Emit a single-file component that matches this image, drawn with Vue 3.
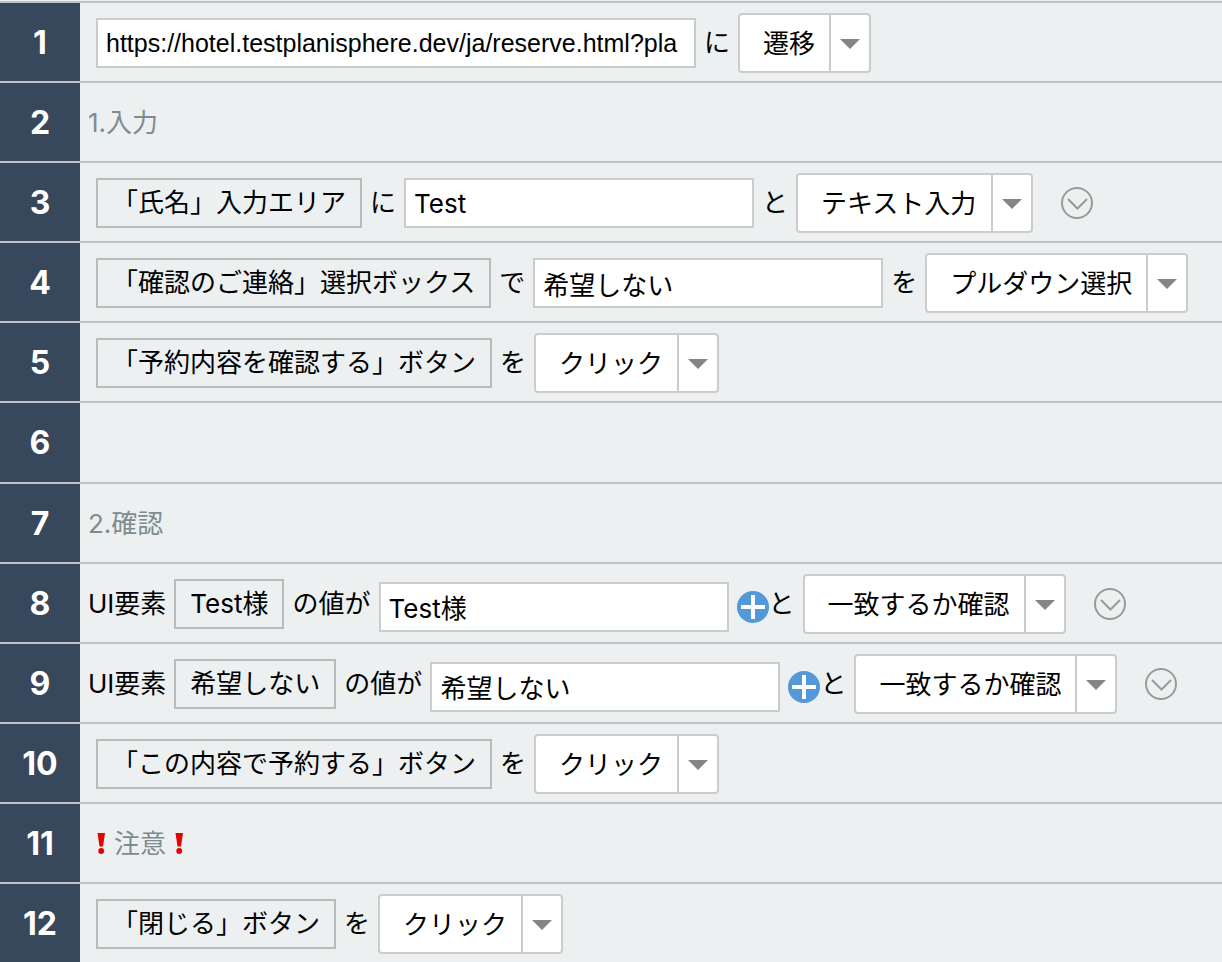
<script setup>
import { ref } from 'vue'

const steps = ref([
  [
    { type: 'input', value: 'https://hotel.testplanisphere.dev/ja/reserve.html?pla', label: 'URL', url: true },
    { type: 'text', value: 'に' },
    { type: 'select', value: '遷移' }
  ],
  [{ type: 'comment', value: '1.入力' }],
  [
    { type: 'element', value: '「氏名」入力エリア' },
    { type: 'text', value: 'に' },
    { type: 'input', value: 'Test', label: '入力値' },
    { type: 'text', value: 'と' },
    { type: 'select', value: 'テキスト入力' },
    { type: 'more' }
  ],
  [
    { type: 'element', value: '「確認のご連絡」選択ボックス' },
    { type: 'text', value: 'で' },
    { type: 'input', value: '希望しない', label: '選択値' },
    { type: 'text', value: 'を' },
    { type: 'select', value: 'プルダウン選択' }
  ],
  [
    { type: 'element', value: '「予約内容を確認する」ボタン' },
    { type: 'text', value: 'を' },
    { type: 'select', value: 'クリック' }
  ],
  [],
  [{ type: 'comment', value: '2.確認' }],
  [
    { type: 'text', value: 'UI要素' },
    { type: 'element', value: 'Test様' },
    { type: 'text', value: 'の値が' },
    { type: 'expected', value: 'Test様', suffix: 'と' },
    { type: 'select', value: '一致するか確認' },
    { type: 'more' }
  ],
  [
    { type: 'text', value: 'UI要素' },
    { type: 'element', value: '希望しない' },
    { type: 'text', value: 'の値が' },
    { type: 'expected', value: '希望しない', suffix: 'と' },
    { type: 'select', value: '一致するか確認' },
    { type: 'more' }
  ],
  [
    { type: 'element', value: '「この内容で予約する」ボタン' },
    { type: 'text', value: 'を' },
    { type: 'select', value: 'クリック' }
  ],
  [{ type: 'comment', value: '注意', alert: true }],
  [
    { type: 'element', value: '「閉じる」ボタン' },
    { type: 'text', value: 'を' },
    { type: 'select', value: 'クリック' }
  ]
])
</script>

<template>
  <ol class="steps">
    <li v-for="(parts, index) in steps" :key="index" class="step">
      <div class="number">{{ index + 1 }}</div>
      <div class="content">
        <template v-for="(part, i) in parts" :key="i">
          <span v-if="part.type === 'text'">{{ part.value }}</span>

          <p v-else-if="part.type === 'comment'" class="comment">
            <svg v-if="part.alert" class="mark" viewBox="0 0 26 26" aria-hidden="true">
              <path d="M9.500 2h7.500l-2 13.500h-3.500z" />
              <circle cx="13.200" cy="20" r="2.900" />
            </svg>
            <span>{{ part.value }}</span>
            <svg v-if="part.alert" class="mark" viewBox="0 0 26 26" aria-hidden="true">
              <path d="M9.500 2h7.500l-2 13.500h-3.500z" />
              <circle cx="13.200" cy="20" r="2.900" />
            </svg>
          </p>

          <button v-else-if="part.type === 'element'" type="button" class="element">{{ part.value }}</button>

          <input
            v-else-if="part.type === 'input'"
            v-model="part.value"
            type="text"
            class="field"
            :class="{ url: part.url }"
            :aria-label="part.label"
          >

          <div v-else-if="part.type === 'expected'" class="expected">
            <div class="expected-value">
              <input v-model="part.value" type="text" class="field" aria-label="期待値">
              <button type="button" class="icon-button" aria-label="追加">
                <svg viewBox="0 0 32 32">
                  <circle cx="16" cy="16" r="16" fill="#5398d9" />
                  <path d="M16 4v24M4 16h24" stroke="#fff" stroke-width="4" />
                </svg>
              </button>
            </div>
            <span>{{ part.suffix }}</span>
          </div>

          <div v-else-if="part.type === 'select'" class="command">
            <select aria-label="コマンド">
              <option>{{ part.value }}</option>
            </select>
            <span class="caret">
              <svg viewBox="0 0 20 10"><path d="M0 0h20L10 10z" fill="#858585" /></svg>
            </span>
          </div>

          <button v-else type="button" class="icon-button more" aria-label="詳細">
            <svg viewBox="0 0 32 32" fill="none" stroke="#9a9a9a">
              <circle cx="16" cy="16" r="15" stroke-width="2" />
              <path d="M7 12l9.500 9.500L26 12" stroke-width="2" />
            </svg>
          </button>
        </template>
      </div>
    </li>
  </ol>
</template>

<style>
body {
  margin: 0;
  background: #ecf0f1;
}
</style>

<style scoped>
.steps {
  display: grid;
  grid-auto-rows: minmax(80px, 1fr);
  box-sizing: border-box;
  min-height: 100vh;
  margin: 0;
  padding: 1px 0 0;
  list-style: none;
  font-family: Inter, "Noto Sans CJK JP", sans-serif;
  font-size: 26px;
  line-height: 40px;
  color: #000;
}
.step {
  display: flex;
  border-top: 2px solid #bdc3c9;
}
.number {
  display: grid;
  place-items: center;
  flex: none;
  width: 80px;
  padding-top: 2px;
  background: #37475c;
  color: #fff;
  font-size: 32px;
  font-weight: 700;
}
.content {
  display: flex;
  flex: 1;
  align-items: center;
  gap: 8px;
  min-width: 0;
  padding: 2px 0 0 8px;
  white-space: nowrap;
}
.comment {
  display: flex;
  align-items: center;
  margin: 0;
  color: #7f8c8d;
}
.mark {
  width: 26px;
  height: 26px;
  fill: #e60000;
}
button,
input,
select {
  box-sizing: border-box;
  margin: 0;
  font: inherit;
  color: inherit;
}
.element {
  height: 50px;
  padding: 0 14px;
  border: 2px solid #bbb;
  background: none;
  cursor: pointer;
}
.element:first-child,
.url {
  margin-left: 8px;
}
.field {
  width: 350px;
  height: 50px;
  padding: 0 8px;
  border: 2px solid #ccc;
  border-radius: 0;
  background: #fff;
}
.field.url {
  width: 600px;
  font-family: "Liberation Sans", sans-serif;
  font-size: 25px;
}
.expected,
.expected-value {
  display: flex;
  align-items: center;
}
.expected-value {
  gap: 8px;
  padding-top: 6px;
}
.icon-button {
  width: 32px;
  height: 32px;
  padding: 0;
  border: 0;
  background: none;
  cursor: pointer;
}
.icon-button svg {
  display: block;
}
.more {
  margin-left: 20px;
}
.command {
  display: grid;
  box-sizing: border-box;
  height: 60px;
  border: 2px solid #ccc;
  border-radius: 4px;
  background: #fff;
}
.command select,
.caret {
  grid-area: 1 / 1;
  padding-top: 2px;
}
.command select {
  padding-right: 53px;
  padding-left: 23px;
  border: 0;
  background: none;
  appearance: none;
}
.caret {
  display: grid;
  place-items: center;
  justify-self: end;
  width: 38px;
  border-left: 2px solid #ccc;
  pointer-events: none;
}
.caret svg {
  width: 20px;
  height: 10px;
}
</style>
